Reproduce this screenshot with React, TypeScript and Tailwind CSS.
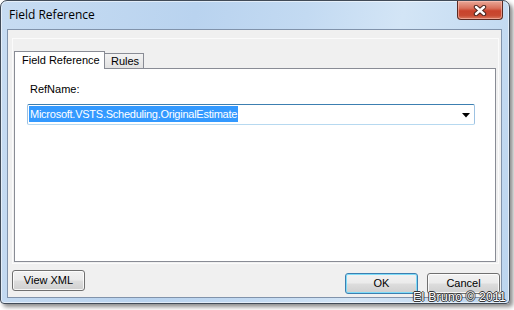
import React from 'react'

const BTN =
  'h-[21px] w-[73px] rounded-[3px] border text-[11px] text-black flex items-center justify-center bg-[linear-gradient(to_bottom,#f2f2f2_0%,#ebebeb_48%,#dddddd_52%,#cfcfcf_100%)]'

function CloseButton() {
  return (
    <div className="w-[46px] h-[19px] rounded-b-[4px] border border-t-0 border-[#5b2a22] shadow-[inset_0_0_0_1px_rgba(255,200,190,0.55)] bg-[linear-gradient(to_bottom,#e9a898_0%,#d9715c_40%,#c9432c_55%,#c84a32_80%,#d97a60_100%)] flex items-center justify-center">
      <svg width="14" height="11" viewBox="0 0 14 11">
        <path d="M3 2 L11 9 M11 2 L3 9" stroke="#4a2620" strokeWidth="4.4" strokeLinecap="round" />
        <path d="M3 2 L11 9 M11 2 L3 9" stroke="#ffffff" strokeWidth="2.4" strokeLinecap="round" />
      </svg>
    </div>
  )
}

export default function App() {
  return (
    <div className="w-[514px] h-[310px] bg-white relative font-['Liberation_Sans',Arial,sans-serif]">
      {/* window */}
      <div className="w-[510px] h-[304px] rounded-t-[7px] rounded-b-[4px] border border-[#414b58] shadow-[3px_3px_4px_rgba(0,0,0,0.45),inset_0_0_0_1px_rgba(255,255,255,0.55)] bg-[linear-gradient(100deg,#c7dcf2_0%,#b9d3ef_35%,#c3daf2_55%,#d3e5f6_72%,#bcd5ef_100%)] flex flex-col">
        {/* title bar */}
        <div className="h-[28px] flex items-start justify-between pl-[8px] pr-[6px]">
          <span className="pt-[7px] text-[12px] leading-[14px] text-black font-['Open_Sans',sans-serif]">Field Reference</span>
          <CloseButton />
        </div>

        {/* client area */}
        <div className="ml-[6px] mr-[7px] mb-[5px] flex-1 border border-[#8193ab] bg-[#f0f0f0] flex flex-col pl-[4px] pr-[1px] pt-[8px]">
          <div className="h-[226px] mr-px border border-[#fbfbfb] px-[1px] pt-[12px] flex flex-col">
            {/* tabs */}
            <div className="flex items-end h-[18px] -mb-px relative z-10 text-[11px] text-black">
              <div className="h-[18px] w-[91px] bg-white border border-b-0 border-[#898c95] pl-[7px] pt-[2px] leading-[13px]">
                Field Reference
              </div>
              <div className="h-[15px] w-[40px] -ml-px mb-px border border-b-0 border-[#898c95] bg-[linear-gradient(to_bottom,#f3f3f3,#e2e2e2)] pl-[6px] pt-[1px] leading-[13px]">
                Rules
              </div>
            </div>
            {/* tab page */}
            <div className="w-[482px] h-[194px] bg-white border border-[#898c95] flex flex-col pt-[14px]">
              <div className="pl-[15px] text-[11px] leading-[13px] text-black">RefName:</div>
              <div className="ml-[12px] mt-[8px] w-[448px] h-[21px] rounded-[2px] border border-x-[#9dc2e2] border-t-[#3c7fb1] border-b-[#b7d9f0] bg-white flex items-start pl-px pt-px pr-[4px]">
                <span className="h-[16px] bg-[#3399ff] text-white text-[11px] tracking-[-0.25px] leading-[16px] px-px">
                  Microsoft.VSTS.Scheduling.OriginalEstimate
                </span>
                <div className="flex-1" />
                <svg width="8" height="5" viewBox="0 0 8 5" className="mt-[7px]">
                  <path d="M0 0 H8 L4 4.5 Z" fill="#000" />
                </svg>
              </div>
            </div>
          </div>

          {/* buttons */}
          <div className="flex items-start mt-[6px]">
            <div className={BTN + ' border-[#707070] shadow-[inset_0_0_0_1px_rgba(255,255,255,0.8)]'}>View XML</div>
            <div className="flex-1" />
            <div className={BTN + ' mt-[3px] border-[#3c7fb1] shadow-[inset_0_0_0_1px_#7fdcf8]'}>OK</div>
            <div className={BTN + ' mt-[3px] ml-[9px] border-[#707070] shadow-[inset_0_0_0_1px_rgba(255,255,255,0.8)]'}>Cancel</div>
          </div>
        </div>
      </div>

      {/* watermark */}
      <div className="absolute left-[413px] top-[291px] text-[12px] leading-[13px] text-white tracking-[0.4px] [text-shadow:1px_0_0_#333,-1px_0_0_#333,0_1px_0_#333,0_-1px_0_#333]">
        El Bruno © 2011
      </div>
    </div>
  )
}
